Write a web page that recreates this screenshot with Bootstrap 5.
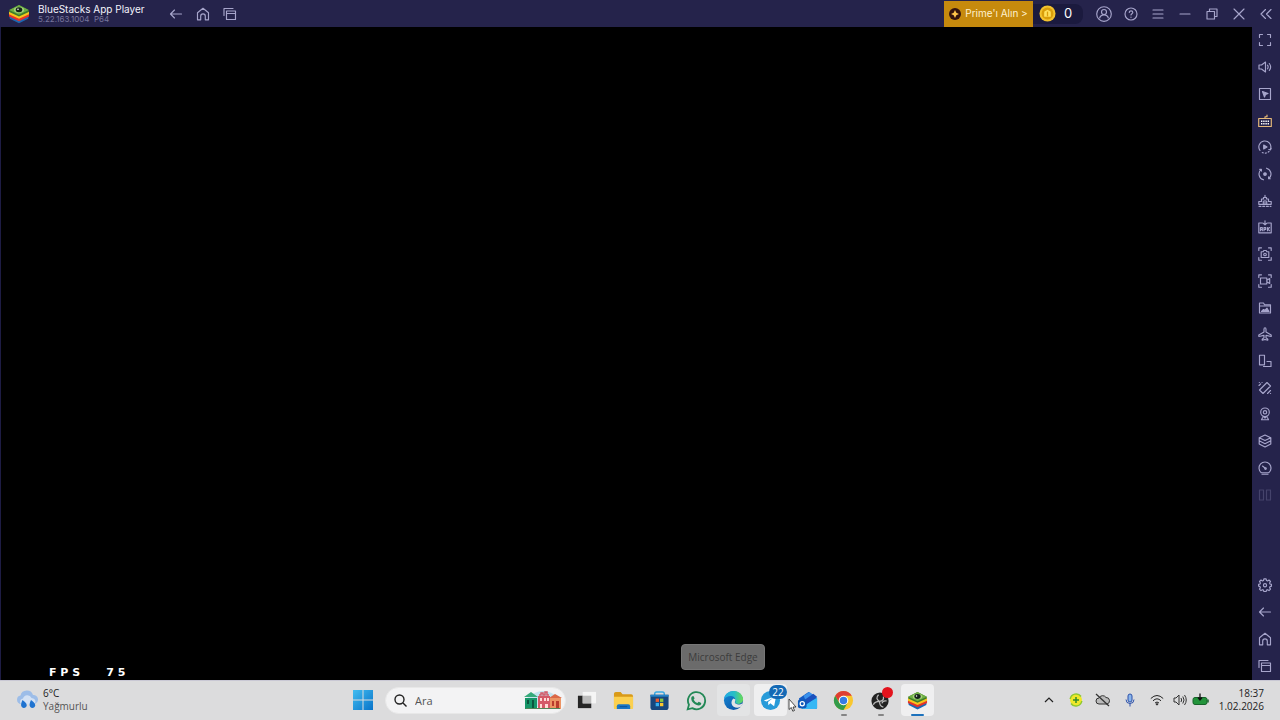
<!DOCTYPE html>
<html lang="tr">
<head>
<meta charset="utf-8">
<meta name="viewport" content="width=device-width, initial-scale=1">
<title>BlueStacks App Player</title>
<link href="https://cdn.jsdelivr.net/npm/bootstrap@5.3.0/dist/css/bootstrap.min.css" rel="stylesheet">
<style>
:root { --navy:#25234b; --line:#a7a5cb; --strip:27px; }
body { background:#000; font-family:"Open Sans",sans-serif; font-size:10px; line-height:13px; }
svg { display:block; flex:none; }
button { border:0; padding:0; background:none; color:inherit; }
.line-icon { width:14px; height:14px; fill:none; stroke:currentColor; stroke-width:1.15; stroke-linecap:round; stroke-linejoin:round; }
.line-icon.wide { width:16px; height:16px; }
.titlebar { background:var(--navy); height:var(--strip); color:var(--line); padding-right:1px; }
.brand { width:162px; padding-left:8px; }
.app-name { font-family:"Inter",sans-serif; font-size:10px; line-height:11px; color:#f4f3fb; }
.app-version { font-family:"Inter",sans-serif; font-size:8px; line-height:9px; color:#77759c; }
.tool { width:var(--strip); height:var(--strip); display:flex; align-items:center; justify-content:center; }
.prime { width:89px; height:26px; background:#c68a0d; color:#fff1cf; font-family:"Inter",sans-serif; font-size:10px; }
.coins { width:50px; height:20px; margin-right:7px; padding-left:6px; background:#1b1a3e; border-radius:0 8px 8px 0; color:#fff; font-family:"Inter",sans-serif; font-size:13px; }
.work { min-height:0; }
.stage { background:#000; border-left:1px solid #1e1c44; min-width:0; }
.fps { left:48px; bottom:1px; color:#fff; font-family:"DejaVu Sans",sans-serif; font-size:11px; font-weight:700; gap:26px; }
.sidebar { width:28px; padding:0 2px 1px 0; background:var(--navy); color:var(--line); }
.sidebar button { flex:1 1 0; min-height:0; display:flex; align-items:center; justify-content:center; }
.sidebar .spacer { flex:2.4 1 0; }
.sidebar .keys { color:#e6b978; }
.sidebar .off { color:#45436b; }
.tip { left:681px; bottom:10px; width:84px; height:26px; background:#6b6b6b; border:1px solid #777; border-radius:4px; color:#3c3c3c; }
.taskbar { height:40px; background:#dcdcdd; box-shadow:inset 0 1px #c9c8d4; color:#222; }
.side { flex:1 1 0; min-width:0; }
.weather { padding-left:16px; gap:5px; text-align:left; }
.weather small { font-size:10px; color:#555; }
.center-group { gap:2px; }
.start { width:37px; margin-right:2px; }
.search { width:181px; height:27px; background:#f3f3f4; border:1px solid #e8e8e8; border-radius:14px; padding:0 3px 0 8px; gap:8px; }
.search input { min-width:0; width:90px; border:0; outline:0; background:none; padding:0; font-size:11px; color:#222; }
.search input::placeholder { color:#555; opacity:1; }
.apps { width:368px; }
.apps button { flex:1 1 0; height:32px; margin:0 2px; display:flex; align-items:center; justify-content:center; position:relative; border-radius:4px; }
.apps svg { width:21px; height:21px; }
.apps .hover { background:#e3e4e5; }
.apps .active { background:#efeff0; }
.mark-open::after { content:""; position:absolute; bottom:0; width:6px; height:2px; border-radius:1px; background:#858585; }
.active.mark-open::after { width:13px; background:#1d72bd; }
.count { position:absolute; left:15px; top:1px; width:18px; height:14px; border-radius:7px; background:#1469b5; color:#fff; font-size:10px; line-height:14px; }
.rec { position:absolute; right:4px; top:3px; width:11px; height:11px; border-radius:50%; background:#e3131d; }
.pointer { position:absolute; left:788px; bottom:8px; }
.tray button { width:27px; height:30px; display:flex; align-items:center; justify-content:center; }
.tray .slim { width:20px; }
.tray .clock { width:70px; padding-right:16px; text-align:right; }
</style>
</head>
<body class="vh-100 overflow-hidden">
<svg width="0" height="0" class="position-absolute" aria-hidden="true">
  <symbol id="bs" viewBox="0 0 22 22">
    <path d="M1.500 13.500 11 9l9.500 4.500-.3 2.300L11 20.300 1.800 15.800z" fill="#1c67b3"/>
    <path d="M1 11 11 7l10 4v2.600L11 18.200 1 13.600z" fill="#e4332b"/>
    <path d="M1 8.700 11 5l10 3.700v2.500L11 15.800 1 11.200z" fill="#f6c51c"/>
    <path d="M1.300 7 11 2l9.700 5v2L11 13.400 1.300 9z" fill="#3c7d2a"/>
    <path d="M1.300 7 11 2l9.700 5L11 11.700z" fill="#6fb044"/>
    <ellipse cx="11" cy="6.900" rx="5" ry="2.800" fill="#a8d37e"/><ellipse cx="11" cy="6.800" rx="3.300" ry="2.500" fill="#14221a"/><circle cx="10" cy="6.200" r=".8" fill="#fff"/>
  </symbol>
  <symbol id="back" viewBox="0 0 14 14"><path d="M12.500 7h-11M5.500 3 1.500 7l4 4"/></symbol>
  <symbol id="home" viewBox="0 0 14 14"><path d="M1.500 5.800 7 1.300l5.500 4.500v7H9.300V9.200a2.300 2.300 0 0 0-4.600 0v3.600H1.500z"/></symbol>
  <symbol id="recent" viewBox="0 0 14 14"><path d="M1 8.500v-7h9M3.500 4h9v8.500h-9zM3.500 6.500h9"/></symbol>
</svg>

<div class="d-flex flex-column h-100">
  <header class="titlebar d-flex align-items-center flex-shrink-0">
    <div class="brand d-flex align-items-center gap-2">
      <svg width="22" height="22"><use href="#bs"/></svg>
      <div class="text-nowrap"><div class="app-name">BlueStacks App Player</div><div class="app-version">5.22.163.1004&nbsp; P64</div></div>
    </div>
    <button class="tool" aria-label="Geri"><svg class="line-icon"><use href="#back"/></svg></button>
    <button class="tool" aria-label="Ana ekran"><svg class="line-icon"><use href="#home"/></svg></button>
    <button class="tool" aria-label="Son uygulamalar"><svg class="line-icon"><use href="#recent"/></svg></button>
    <button class="prime ms-auto d-flex align-items-center justify-content-center gap-1 text-nowrap"><svg width="12" height="12" viewBox="0 0 12 12"><circle cx="6" cy="6" r="6" fill="#35130d"/><path d="M6 2 7.300 4.700 10 6 7.300 7.300 6 10 4.700 7.300 2 6l2.700-1.300z" fill="#ffc34a"/></svg>Prime'ı Alın &gt;</button>
    <div class="coins d-flex align-items-center gap-2"><svg width="17" height="17" viewBox="0 0 18 18"><circle cx="9" cy="9" r="8.500" fill="#f3c22e"/><circle cx="9" cy="9" r="6.300" fill="#d99e0b"/><path d="M5.500 12.500V8q0-2 1.700-2L9 5l1.800 1q1.700 0 1.700 2v4.500z" fill="#ffe05b"/><path d="M8.300 7h1.400v5H8.300z" fill="#d99e0b"/></svg><span>0</span></div>
    <button class="tool" aria-label="Hesap"><svg class="line-icon wide" viewBox="0 0 16 16"><circle cx="8" cy="8" r="7.300"/><circle cx="8" cy="6" r="2.500"/><path d="M3.700 12c.5-2.200 2-3.100 4.300-3.100s3.800.9 4.300 3.100"/></svg></button>
    <button class="tool" aria-label="Yardım"><svg class="line-icon" viewBox="0 0 14 14"><circle cx="7" cy="7" r="6"/><path d="M5.300 5.500c0-2.300 3.500-2.200 3.500 0 0 1.200-1.800 1.200-1.800 2.500M7 10v.3"/></svg></button>
    <button class="tool" aria-label="Menü"><svg class="line-icon" viewBox="0 0 14 14"><path d="M2 3h10M2 7h10M2 11h10"/></svg></button>
    <button class="tool" aria-label="Küçült"><svg class="line-icon" viewBox="0 0 14 14"><path d="M2 7h10"/></svg></button>
    <button class="tool" aria-label="Geri yükle"><svg class="line-icon" viewBox="0 0 14 14"><path d="M2 4.500h7.500V12H2zM4.500 4.500V2H12v7.500H9.500"/></svg></button>
    <button class="tool" aria-label="Kapat"><svg class="line-icon" viewBox="0 0 14 14"><path d="m2 2 10 10M12 2 2 12"/></svg></button>
    <button class="tool" aria-label="Daralt"><svg class="line-icon" viewBox="0 0 14 14"><path d="M6.500 2.500 2 7l4.500 4.500M12 2.500 7.500 7l4.500 4.500"/></svg></button>
  </header>

  <div class="work d-flex flex-grow-1 position-relative">
    <main class="stage flex-grow-1 position-relative"><div class="fps d-flex position-absolute"><span>F P S</span><span>7 5</span></div></main>
    <nav class="sidebar d-flex flex-column" aria-label="Araçlar">
      <button aria-label="Tam ekran"><svg class="line-icon" viewBox="0 0 14 14"><path d="M1.500 4.500v-3h3M9.500 1.500h3v3M12.500 9.500v3h-3M4.500 12.500h-3v-3"/></svg></button>
      <button aria-label="Ses"><svg class="line-icon" viewBox="0 0 14 14"><path d="M1 5h2.500L7.500 2v10L3.500 9H1zM9.500 5.200q1.300 1.800 0 3.600M11.300 3.500q2.700 3.500 0 7"/></svg></button>
      <button aria-label="İmleç"><svg class="line-icon" viewBox="0 0 14 14"><path d="M1.500 1.500h11v11h-11z"/><path d="m4.500 4.500 5.500 2-2.500 1-1 2.500z" fill="currentColor"/></svg></button>
      <button class="keys" aria-label="Oyun kontrolleri"><svg class="line-icon" viewBox="0 0 14 14"><path d="M.7 4.500h12.600v8H.7zM7 4.500V2.700h2V1"/><path d="M3 7.300h8M3 9.700h8" stroke="#fff" stroke-width="1.600" stroke-dasharray="1.400 .8" stroke-linecap="butt"/></svg></button>
      <button aria-label="Eşitle"><svg class="line-icon" viewBox="0 0 14 14"><path d="M2 10.500a6 6 0 1 1 10.500-1.500M10.800 9.500l1.700.4.700-1.700"/><path d="M11 11.500a6 6 0 0 1-8 .2" stroke-dasharray="1 2"/><path d="M5.700 5 9 7 5.700 9z" fill="currentColor"/></svg></button>
      <button aria-label="Döndür"><svg class="line-icon" viewBox="0 0 14 14"><path d="M5.500 12.800A6 6 0 0 1 3.200 2.400M8.500 1.200a6 6 0 0 1 2.300 10.400M1.700 2.300l1.700 0 0 1.800M12.300 11.700l-1.700 0 0-1.800"/><circle cx="7" cy="7" r="1.300" fill="currentColor"/></svg></button>
      <button aria-label="Çoklu örnek"><svg class="line-icon" viewBox="0 0 14 14"><path d="M1 12.300h12" stroke-dasharray="2 1.700"/><path d="M.8 10.300V7.500h2.700V5h2V3.500h3V5h2v2.500h2.700v2.800zM7 3.500V1.200M5.300 7v3M7 6v4M8.700 7v3"/></svg></button>
      <button aria-label="APK yükle"><svg class="line-icon" viewBox="0 0 14 14"><path d="M4.500 3H.8v9.800h12.400V3H9.500M7 .7v4M5.300 3.300 7 4.800l1.700-1.500M2.500 10.700V7.500h1.800v3.200M2.500 9.300h1.800M6 10.700V7.500h1.700v1.800H6M9.500 7.500v3.200M11.500 7.500 9.700 9l1.800 1.700"/></svg></button>
      <button aria-label="Ekran görüntüsü"><svg class="line-icon" viewBox="0 0 14 14"><path d="M.8 3.500V.8h2.700M10.500.8h2.700v2.700M13.200 10.500v2.700h-2.700M3.500 13.200H.8v-2.700M3.200 4.700h2l.6-1.200h2.400l.6 1.200h2v5.800H3.200z"/><circle cx="7" cy="7.500" r="1.300"/></svg></button>
      <button aria-label="Kayıt"><svg class="line-icon" viewBox="0 0 14 14"><path d="M.8 3.500V.8h2.700M10.500.8h2.700v2.700M13.200 10.500v2.700h-2.700M3.500 13.200H.8v-2.700M2.500 4h6.300v6H2.500zM8.800 6.200 11.700 4.500v5L8.800 7.800"/></svg></button>
      <button aria-label="Medya"><svg class="line-icon" viewBox="0 0 14 14"><path d="M1.500 12V2h4l1 1.700h6V12zM1.500 5h11"/><path d="m3.500 10.500 2-2 1.300 1L9 7.200l2 3.300z" fill="currentColor"/></svg></button>
      <button aria-label="Uçak modu"><svg class="line-icon" viewBox="0 0 14 14"><path d="M6 5V2.200c0-1.900 2-1.900 2 0V5l5.200 3v1.500L8 8.400v2.400l1.800 1.300v1L7 12.500l-2.800.6v-1L6 10.800V8.400L.8 9.500V8z"/></svg></button>
      <button aria-label="Ekranı çevir"><svg class="line-icon" viewBox="0 0 14 14"><path d="M1.500 1.200h5v9.600h-5zM9 7.500h4v5H5.500"/></svg></button>
      <button aria-label="Salla"><svg class="line-icon" viewBox="0 0 14 14"><path d="M9 1.500 12.500 5 5 12.500 1.500 9zM1 4.500l1.700-1.700M1.300 1.500h.1M4 1.500h.1M9.500 12.500l3-3M12.500 12.500h.1"/></svg></button>
      <button aria-label="Konum"><svg class="line-icon" viewBox="0 0 14 14"><circle cx="7" cy="5.300" r="4.300"/><circle cx="7" cy="5.300" r="1.700"/><path d="M5 9.200 7 11l2-1.800M3.500 12.700h7l-1-2M4.500 10.700l-1 2"/></svg></button>
      <button aria-label="Katmanlar"><svg class="line-icon" viewBox="0 0 14 14"><path d="m7 1 5.800 2.700L7 6.500 1.200 3.700zM1.200 3.700v6.200L7 13l5.800-3.100V3.700M1.200 6.700 7 9.700l5.800-3"/></svg></button>
      <button aria-label="Performans"><svg class="line-icon" viewBox="0 0 14 14"><path d="M3.300 11.700a6 6 0 1 1 7.400 0zM7.300 7.300 4.500 5M4 13.200h6"/><circle cx="7.500" cy="7.500" r=".8"/></svg></button>
      <button class="off" aria-label="Bölünmüş görünüm"><svg class="line-icon" viewBox="0 0 14 14"><path d="M1.500 2h4v10h-4zM12.500 2h-4v10h4z"/></svg></button>
      <div class="spacer"></div>
      <button aria-label="Ayarlar"><svg class="line-icon" viewBox="0 0 14 14"><path d="M5.900.8h2.200l.4 1.700 1 .4 1.500-.9L12.500 3.500l-.9 1.500.4 1 1.500.4v1.700l-1.500.5-.4 1 .9 1.500-1.500 1.500-1.500-.9-1 .4-.4 1.500H5.900l-.4-1.500-1-.4-1.500.9-1.500-1.500.9-1.500-.4-1L.6 8.100V6.400L2 6l.4-1-.9-1.500L3 2l1.500.9 1-.4z"/><circle cx="7" cy="7.200" r="1.600"/></svg></button>
      <button aria-label="Geri"><svg class="line-icon"><use href="#back"/></svg></button>
      <button aria-label="Ana ekran"><svg class="line-icon"><use href="#home"/></svg></button>
      <button aria-label="Son uygulamalar"><svg class="line-icon"><use href="#recent"/></svg></button>
    </nav>
    <div class="tip position-absolute d-flex align-items-center justify-content-center text-nowrap" role="tooltip">Microsoft Edge</div>
  </div>

  <footer class="taskbar d-flex align-items-center flex-shrink-0 position-relative">
    <div class="side"><button class="weather d-flex align-items-center">
      <svg width="22" height="22" viewBox="0 0 22 22"><path d="M5 15a4.300 4.300 0 0 1-.5-8.500A6.500 6.500 0 0 1 17 6a4.500 4.500 0 0 1 1 9z" fill="#9dbde8"/><path d="M4 13q0-3 3-3.500a4.500 4.500 0 0 1 8.500-.5q4 .5 4 4-.5 2-2 2H6q-2 0-2-2" fill="#d3e1f4"/><path d="M6.500 11q6 4 3.600 7-2.300 2-4.300 0-1.800-2 .7-7M15 11q6 4 3.600 7-2.300 2-4.300 0-1.800-2 .7-7" fill="#1f73d0"/></svg>
      <span>6°C<br><small>Yağmurlu</small></span></button></div>
    <div class="center-group d-flex align-items-center">
      <button class="start d-flex justify-content-center" aria-label="Başlat"><svg width="20" height="20" viewBox="0 0 20 20"><defs><linearGradient id="win" x2="1" y2="1"><stop stop-color="#43bdf0"/><stop offset="1" stop-color="#0873c9"/></linearGradient></defs><path d="M0 0h9.500v9.500H0zM10.500 0H20v9.500h-9.500zM0 10.500h9.500V20H0zM10.500 10.500H20V20h-9.500z" fill="url(#win)"/></svg></button>
      <label class="search d-flex align-items-center">
        <svg width="13" height="13" viewBox="0 0 13 13" fill="none" stroke="#222" stroke-width="1.400"><circle cx="5.500" cy="5.500" r="4.500"/><path d="m9 9 3.500 3.500"/></svg>
        <input type="text" placeholder="Ara" aria-label="Ara">
        <svg class="ms-auto" width="38" height="21" viewBox="0 0 38 21"><path d="M2 9Q19-7 36 9v8H2z" fill="#c4e3ee"/><path d="M1 8h12v11H1z" fill="#169568"/><path d="M0 7 7 2l7 5z" fill="#36aa7b"/><path d="M3 10h2v4H3zM8 10h2v8H8z" fill="#0b553f"/><path d="M14 6h12v13H14z" fill="#d45867"/><path d="M15 5h2V3h2v2h2V2h2v3h2" fill="none" stroke="#d45867" stroke-width="1.500"/><path d="M16 8h2v3h-2zM20 8h2v3h-2zM23 8h2v3h-2zM16 14h2v4h-2zM21 14h3v5h-3z" fill="#ffd9d5"/><path d="M26 8h11v11H26z" fill="#ec9464"/><path d="m25 8 6-4 7 4z" fill="#db6847"/><path d="M28 11h2v5h-2zM32 11h3v8h-3z" fill="#b93b2d"/><path d="M2 18.500h34" stroke="#538557"/></svg>
      </label>
      <div class="apps d-flex">
        <button aria-label="Görev görünümü"><svg viewBox="0 0 22 22"><path d="M2 6h14v13H2z" fill="#252525"/><path d="M7 2h14v12H7z" fill="#f5f5f5"/><path d="M7 6h9v8H7z" fill="#bdbdbd"/></svg></button>
        <button aria-label="Dosya Gezgini"><svg viewBox="0 0 22 22"><path d="M1 4q0-2 2-2h5l2 2.500h9q2 0 2 2V18H1z" fill="#d99a18"/><path d="M1 7h20v12q0 1-1 1H2q-1 0-1-1z" fill="#fbd04f"/><path d="M4 20v-3q0-2 2-2h10q2 0 2 2v3z" fill="#1876c5"/><path d="M7 17.500h8" stroke="#0d4e91"/></svg></button>
        <button aria-label="Microsoft Store"><svg viewBox="0 0 22 22"><path d="M6 6V4q0-2 2-2h6q2 0 2 2v2" fill="none" stroke="#38a9e3" stroke-width="1.500"/><path d="M1.500 5h19v13q0 3-3 3h-13q-3 0-3-3z" fill="#17477e"/><path d="M1.500 5h19v2h-19z" fill="#2683c8"/><path d="M7 9h3.500v3.500H7z" fill="#f05a2b"/><path d="M11.500 9H15v3.500h-3.500z" fill="#8ac53f"/><path d="M7 13.500h3.500V17H7z" fill="#36aff0"/><path d="M11.500 13.500H15V17h-3.500z" fill="#fac62e"/></svg></button>
        <button aria-label="WhatsApp"><svg viewBox="0 0 22 22"><path d="m1.800 20.200 1.300-4.800A9 9 0 1 1 6.600 19z" fill="none" stroke="#238856" stroke-width="1.900"/><path d="M7.800 6.200 9 8.700l-1 1.400q1.300 2.500 3.900 3.600l1.400-1.400 2.700 1.300c0 4-5.300 2.800-8.200 0C5 10.900 4.500 6.300 7.800 6.200" fill="#238856"/></svg></button>
        <button class="hover" aria-label="Microsoft Edge"><svg viewBox="0 0 22 22"><defs><linearGradient id="ea" x2="1"><stop stop-color="#22a8e6"/><stop offset=".55" stop-color="#29bfc4"/><stop offset="1" stop-color="#6bdc53"/></linearGradient><linearGradient id="eb" x2="1" y2="1"><stop stop-color="#168bd7"/><stop offset="1" stop-color="#0b4b9e"/></linearGradient></defs><circle cx="11" cy="11" r="10" fill="url(#eb)"/><path d="M1 10C2-2 20-2 21 9.500c.3 4-3.500 5.500-6.500 5-2.500-.4-1.500-2-1.500-3.500C13 5 4 5 1 10" fill="url(#ea)"/><path d="M13 10c0 2-1.500 3 .5 4.500 2.200 1.500 5 .8 7-1-.4 2-1.200 3.300-2.500 4.700-4 1.300-8.200-.2-9-3.700-.5-2.200.5-4.200 2-5.500z" fill="#e3e4e5"/></svg></button>
        <button class="active" aria-label="Telegram"><svg viewBox="0 0 22 22"><circle cx="11" cy="11" r="10" fill="#289bd9"/><path d="m4 11 13-5-2.200 11-4-3-2 2-.4-3.500 5.500-4.500-7 4z" fill="#fff"/></svg><span class="count">22</span></button>
        <button aria-label="Outlook"><svg viewBox="0 0 22 22"><path d="M2 9 12 2l9 6v10q0 2-2 2H5z" fill="#145bc4"/><path d="M7 6 13 2l7 5-10 7z" fill="#3a91eb"/><path d="M21 8v10q0 2-2 2H5l6-6z" fill="#36b7f4"/><path d="M4 13 17 4l4 3-11 8z" fill="#1b50bd"/><rect x="1" y="10" width="9" height="9" rx="2" fill="#0c58b9"/><circle cx="5.500" cy="14.500" r="2.200" fill="none" stroke="#fff" stroke-width="1.300"/></svg></button>
        <button class="mark-open" aria-label="Google Chrome"><svg viewBox="0 0 22 22"><circle cx="11" cy="11" r="10" fill="#f9c72f"/><path d="M2.300 6a10 10 0 0 1 17.400 0H11a5 5 0 0 0-4.300 7.500z" fill="#df3d32"/><path d="M2.300 6a10 10 0 0 0 8.700 15l4.300-7.500a5 5 0 0 1-8.600 0z" fill="#329b4b"/><circle cx="11" cy="11" r="5" fill="#fff"/><circle cx="11" cy="11" r="3.900" fill="#367ce4"/></svg></button>
        <button class="mark-open" aria-label="OBS Studio"><svg viewBox="0 0 22 22"><circle cx="10.500" cy="11.500" r="9" fill="#222"/><path d="M9 5q-4 4 1 7 5-1 4-5M10 12q-5 0-6.500 3.500M10 12q0 5 4 6M17.500 11.500q-4-1-5 2.500" fill="none" stroke="#bbb" stroke-width="1.300"/></svg><span class="rec"></span></button>
        <button class="active mark-open" aria-label="BlueStacks"><svg><use href="#bs"/></svg></button>
      </div>
    </div>
    <div class="side tray d-flex justify-content-end align-items-center">
      <button aria-label="Gizli simgeler"><svg width="10" height="6" viewBox="0 0 10 6" fill="none" stroke="#222" stroke-width="1.200"><path d="m1 5 4-4 4 4"/></svg></button>
      <button aria-label="Güncelleme"><svg width="14" height="14" viewBox="0 0 14 14"><circle cx="7" cy="7" r="6" fill="#f0e829"/><path d="M1.200 6A6 6 0 0 1 12 3.500M12.800 8A6 6 0 0 1 2 10.500" fill="none" stroke="#8fc931" stroke-width="1.500"/><path d="M7 4v6M4 7h6" stroke="#328b2b" stroke-width="1.500"/></svg></button>
      <button aria-label="OneDrive"><svg width="15" height="14" viewBox="0 0 15 14" fill="none" stroke="#333"><path d="M4 11a3 3 0 0 1 0-6 4 4 0 0 1 7-.5 3.300 3.300 0 0 1 1 6.500z" fill="#bbb"/><path d="m1 1 13 12" stroke-width="1.300"/></svg></button>
      <button aria-label="Mikrofon"><svg width="12" height="14" viewBox="0 0 12 14"><rect x="4" y="1" width="4" height="8" rx="2" fill="#8ab5ea" stroke="#2c51aa"/><path d="M2 6.500a4 4 0 0 0 8 0M6 10.500v3" fill="none" stroke="#2c51aa"/></svg></button>
      <button aria-label="Wi-Fi"><svg width="14" height="12" viewBox="0 0 14 12" fill="none" stroke="#222"><path d="M.8 4.500q6.200-6 12.400 0M3 6.800q4-4 8 0M5 9q2-2 4 0"/><circle cx="7" cy="10.300" r=".7" fill="#222"/></svg></button>
      <button class="slim" aria-label="Ses"><svg width="14" height="14" viewBox="0 0 14 14" fill="none" stroke="#333"><path d="M1 5h2l3-3v10L3 9H1zM8 5q1.300 2 0 4M9.800 3.500q2.500 3.500 0 7M11.500 2q3.500 5 0 10"/></svg></button>
      <button class="slim" aria-label="Pil"><svg width="17" height="14" viewBox="0 0 17 14"><rect x="1" y="4.500" width="14" height="7" rx="2" fill="#23943b" stroke="#17632a"/><path d="M16 6.500v3" stroke="#17632a" stroke-width="1.500"/><path d="M8 .5v6M6 4.500 8 7l2-2.500" fill="none" stroke="#111" stroke-width="1.300"/></svg></button>
      <button class="clock d-block text-nowrap">18:37<br>1.02.2026</button>
    </div>
    <svg class="pointer" width="9" height="14" viewBox="0 0 9 14"><path d="M1 1v10.500l2.300-2 1.500 3.700 1.700-.7L5 9h3z" fill="#fff" stroke="#222" stroke-width=".8"/></svg>
  </footer>
</div>
<script src="https://cdn.jsdelivr.net/npm/bootstrap@5.3.0/dist/js/bootstrap.bundle.min.js"></script>
</body>
</html>
